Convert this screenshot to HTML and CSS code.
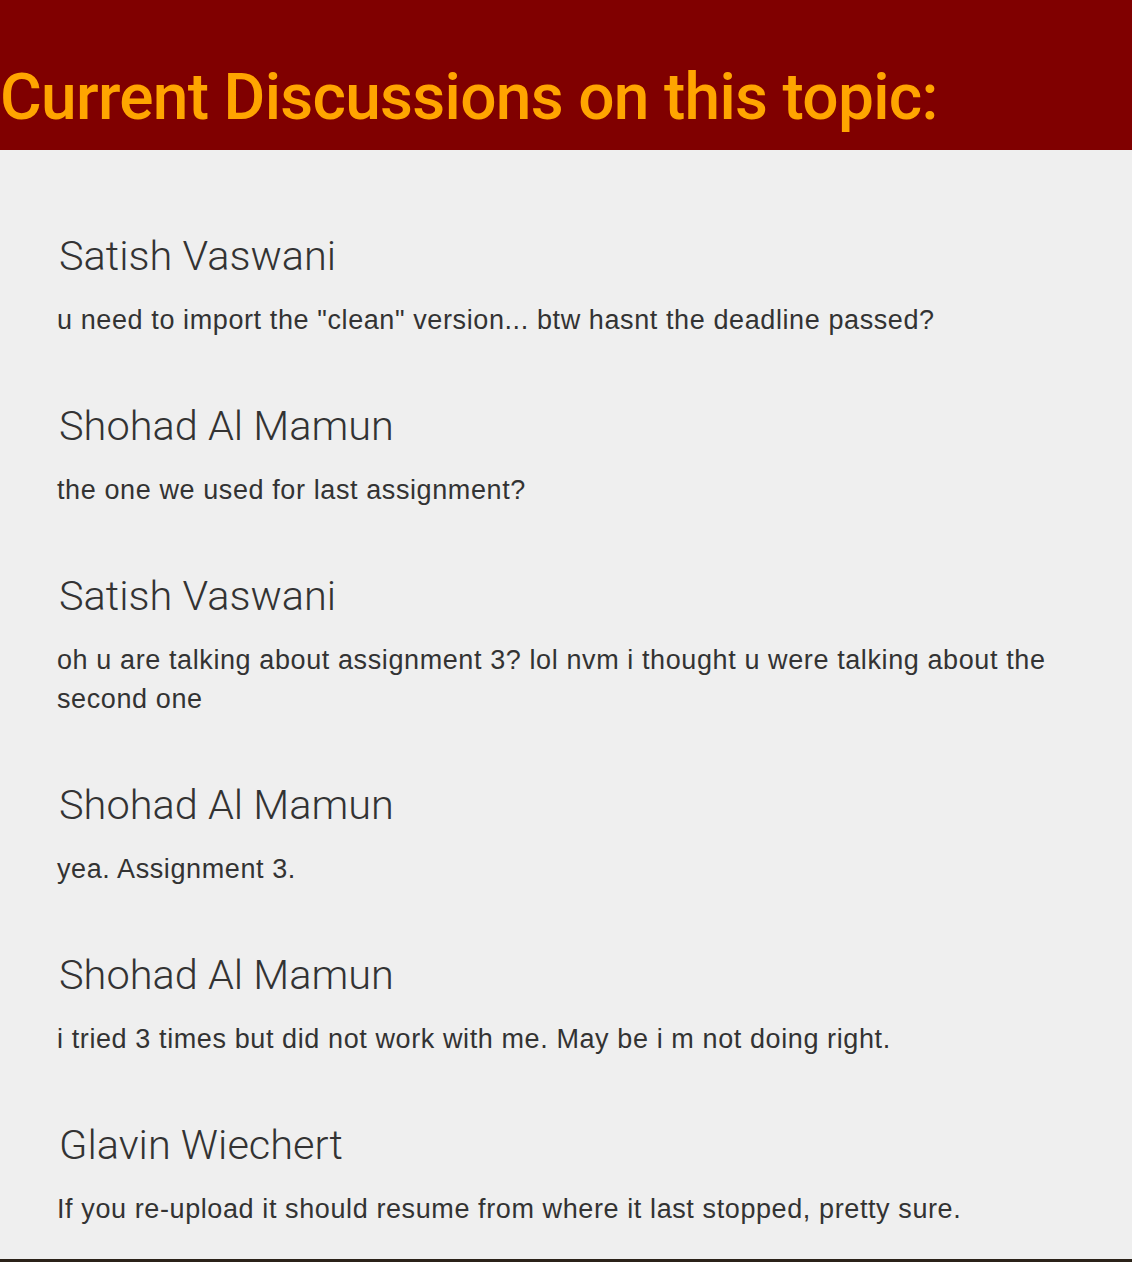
FILE: index.html
```html
<!DOCTYPE html>
<html>
<head>
<meta charset="utf-8">
<link rel="stylesheet" href="styles.css">
</head>
<body>
<header class="banner">
  <h1 class="banner-title">Current Discussions on this topic:</h1>
</header>
<main class="thread">
  <article class="post">
    <h2 class="post-author">Satish Vaswani</h2>
    <p class="post-text">u need to import the "clean" version... btw hasnt the deadline passed?</p>
  </article>
  <article class="post">
    <h2 class="post-author">Shohad Al Mamun</h2>
    <p class="post-text">the one we used for last assignment?</p>
  </article>
  <article class="post">
    <h2 class="post-author">Satish Vaswani</h2>
    <p class="post-text">oh u are talking about assignment 3? lol nvm i thought u were talking about the second one</p>
  </article>
  <article class="post">
    <h2 class="post-author">Shohad Al Mamun</h2>
    <p class="post-text">yea. Assignment 3.</p>
  </article>
  <article class="post">
    <h2 class="post-author">Shohad Al Mamun</h2>
    <p class="post-text">i tried 3 times but did not work with me. May be i m not doing right.</p>
  </article>
  <article class="post">
    <h2 class="post-author">Glavin Wiechert</h2>
    <p class="post-text">If you re-upload it should resume from where it last stopped, pretty sure.</p>
  </article>
</main>
</body>
</html>
```
FILE: styles.css
```css
html, body {
  margin: 0;
  padding: 0;
}
body {
  background: #efefef;
  font-family: "Liberation Sans", Arial, sans-serif;
  color: #333333;
  border-bottom: 3px solid #2b2219;
  box-sizing: border-box;
  height: 1262px;
  overflow: hidden;
}
.banner {
  background: #800000;
  height: 150px;
  box-sizing: border-box;
  padding-top: 66px;
}
.banner-title {
  margin: 0;
  font-family: Roboto, "Liberation Sans", sans-serif;
  font-size: 64px;
  line-height: 64px;
  font-weight: 500;
  color: #ffa500;
  letter-spacing: -0.7px;
}
.thread {
  padding: 81px 57px 0 57px;
}
.post-author {
  margin: 0;
  padding-left: 2px;
  font-family: Roboto, "Liberation Sans", sans-serif;
  font-weight: 300;
  font-size: 41.5px;
  line-height: 50px;
}
.post-text {
  margin: 20px 0 61px 0;
  font-size: 27px;
  line-height: 39px;
  letter-spacing: 0.6px;
}
```
